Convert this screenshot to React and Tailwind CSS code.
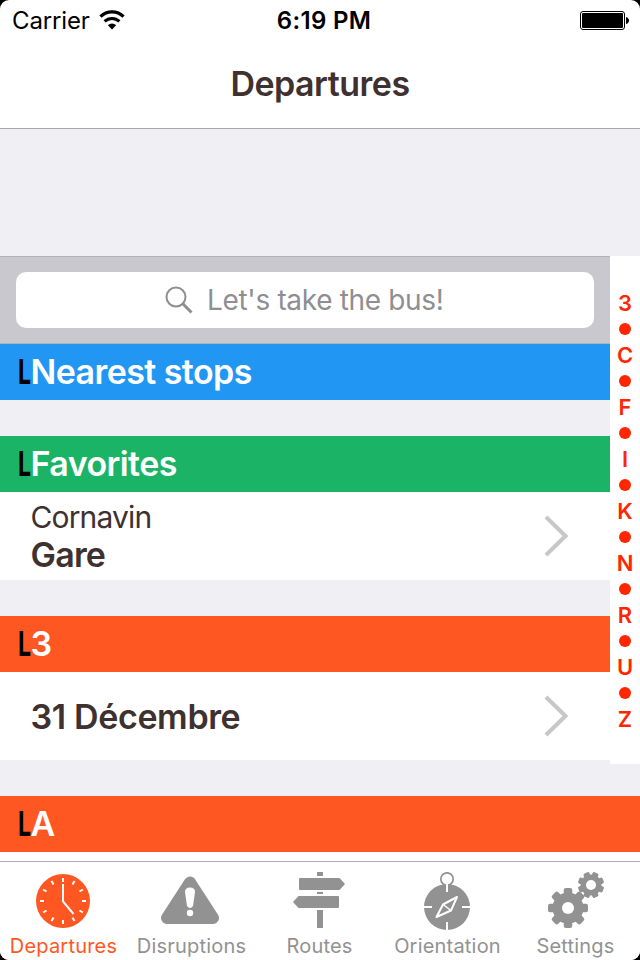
import React from "react";

function StatusBar() {
  return (
    <div className="flex h-10 items-center text-black">
      <div className="flex flex-1 items-center pl-3">
        <span className="pt-0.5 text-[24px] leading-10 tracking-[-0.15px]">Carrier</span>
        <svg className="ml-[9px]" width="26" height="20" viewBox="0 0 26 20" fill="none" stroke="#000">
          <path d="M1.500 6.700A16 16 0 0 1 24.500 6.700" strokeWidth="3.200" />
          <path d="M5.600 11.400A10.600 10.600 0 0 1 20.400 11.400" strokeWidth="3" />
          <path d="M8.800 15.200A6 6 0 0 1 17.200 15.200L13 19.500Z" fill="#000" stroke="none" />
        </svg>
      </div>
      <span className="pl-[7px] pt-0.5 text-[24px] font-semibold leading-10 tracking-[0.3px]">6:19 PM</span>
      <div className="flex flex-1 justify-end pr-[11px]">
        <svg width="49" height="19" viewBox="0 0 49 19">
          <rect x="0.5" y="0.5" width="44" height="18" rx="2.5" fill="none" stroke="#000" />
          <rect x="2" y="2" width="41" height="15" rx="1" />
          <path d="M46 6c4 1 4 6 0 7z" />
        </svg>
      </div>
    </div>
  );
}

function SectionHeader({ title, color }) {
  return (
    <div className={"flex h-14 shrink-0 pl-[17.500px] text-[34px] leading-[55px] " + color}>
      <div className="w-[13px] shrink-0">
        <span className="block w-5 origin-left scale-x-[0.68] font-bold leading-[56px] text-black">L</span>
      </div>
      <span className="whitespace-nowrap font-semibold tracking-[-0.58px] text-white">{title}</span>
    </div>
  );
}

function Row({ children }) {
  return (
    <div className="flex h-[88px] items-center justify-between bg-white pl-[30.500px] pr-10 text-[#3e3130]">
      <div>{children}</div>
      <svg width="26" height="42" viewBox="0 0 26 42" fill="none" stroke="#c7c7c7" strokeWidth="4">
        <path d="M2 2L21.500 21L2 40" />
      </svg>
    </div>
  );
}

const letters = ["3", "C", "F", "I", "K", "N", "R", "U", "Z"];

function IndexBar() {
  return (
    <div className="flex w-[30px] flex-col items-center bg-white pt-[34px] text-[22px] font-semibold leading-[26px] text-[#ff2600]">
      {letters.map((l, i) => (
        <React.Fragment key={l}>
          {i > 0 && (
            <div className="flex h-[26px] items-center">
              <div className="size-3 rounded-full bg-[#ff2600]" />
            </div>
          )}
          <div className="h-[26px]">{l}</div>
        </React.Fragment>
      ))}
    </div>
  );
}

function ClockIcon() {
  return (
    <svg className="mt-px" width="56" height="56" viewBox="0 0 56 56">
      <circle cx="28" cy="28" r="27" fill="#ff5722" />
      <g stroke="#fff" strokeWidth="2">
        {[0, 30, 60, 90, 120, 150, 180, 210, 240, 270, 300, 330].map((a) => (
          <path key={a} d="M28 5V9" transform={`rotate(${a} 28 28)`} />
        ))}
        <path d="M28 11V28.5L38.5 41" fill="none" />
      </g>
    </svg>
  );
}

function WarningIcon() {
  return (
    <svg className="mr-0.5" width="60" height="56" viewBox="0 0 60 56">
      <path d="M30 10.500L53 46H7Z" fill="#929292" stroke="#929292" strokeWidth="12" strokeLinejoin="round" />
      <path d="M25 20Q25 15.500 30 15.500T35 20L33 34Q30 38 27 34Z" fill="#fff" />
      <circle cx="30" cy="41" r="3.2" fill="#fff" />
    </svg>
  );
}

function RoutesIcon() {
  return (
    <svg width="54" height="56" viewBox="0 0 54 56" fill="#929292">
      <path d="M25 0h6v4h-6zM25 20h6v2h-6zM25 38h6v18h-6z" />
      <path d="M8 6h39.500l5.500 6l-5.500 6H8q-1 0-1-1V7q0-1 1-1zM46 24H6.500L1 30l5.500 6H46q1 0 1-1V25q0-1-1-1z" />
    </svg>
  );
}

function CompassIcon() {
  return (
    <svg width="48" height="58" viewBox="0 0 48 58">
      <circle cx="24" cy="35" r="23" fill="#929292" />
      <circle cx="24" cy="7" r="6.200" fill="#fff" stroke="#929292" strokeWidth="1.700" />
      <g stroke="#fff" strokeWidth="2" fill="none">
        <path d="M24 11V20M24 50V58M1 35H9M39 35H47M34 25L28 38.500L13.500 45L20 32.500Z" strokeLinejoin="round" />
        <path d="M20 32.500L28 38.500" strokeWidth="1.500" />
      </g>
    </svg>
  );
}

function Gear({ cx, cy, r, hole, tooth, body, spin = 0 }) {
  return (
    <g>
      <circle cx={cx} cy={cy} r={body} fill="#929292" />
      {[0, 45, 90, 135, 180, 225, 270, 315].map((a) => (
        <rect
          key={a}
          x={cx - tooth / 2}
          y={cy - r}
          width={tooth}
          height={r / 2}
          rx={tooth / 4}
          fill="#929292"
          transform={`rotate(${a + spin} ${cx} ${cy})`}
        />
      ))}
      <circle cx={cx} cy={cy} r={hole} fill="#fff" />
    </g>
  );
}

function SettingsIcon() {
  return (
    <svg width="58" height="58" viewBox="0 0 58 58">
      <Gear cx={21} cy={36} r={20} hole={6} tooth={8.5} body={15.5} />
      <Gear cx={44} cy={13} r={13.2} hole={5} tooth={6.2} body={10.5} spin={22.5} />
    </svg>
  );
}

function Tab({ icon, label, color = "text-[#929292]", nudge = "pr-0.5" }) {
  return (
    <div className={"flex w-32 flex-col items-center " + color}>
      <div className={"flex h-[62px] items-start " + nudge}>{icon}</div>
      <span className="pr-px text-[20px] leading-6 tracking-[0.2px]">{label}</span>
    </div>
  );
}

export default function App() {
  return (
    <div className="h-[960px] w-[640px] overflow-hidden bg-black font-['Inter','Liberation_Sans',sans-serif]">
      <div className="flex h-[960px] flex-col overflow-hidden rounded-[9px] bg-white">
        <StatusBar />
        <h1 className="h-[88px] text-center text-[34px] font-semibold leading-[88px] tracking-[-0.5px] text-[#3e3130]">
          Departures
        </h1>
        <main className="flex h-[733px] flex-col overflow-hidden border-t border-[#a7a7aa] bg-[#efeff4]">
          <div className="h-[127px] shrink-0" />
          <div className="flex h-[508px] shrink-0">
            <div className="w-[610px]">
              <div className="h-[88px] border-y border-y-[#b2b2b2] bg-[#c9c8ce] px-4 py-[15px]">
                <div className="flex h-14 w-[578px] items-center rounded-[10px] bg-white pl-[149px] text-[28px] text-[#8e8e93]">
                  <svg width="28" height="28" viewBox="0 0 28 28" fill="none" stroke="#8e8e93">
                    <circle cx="11" cy="11" r="9.500" strokeWidth="2" />
                    <path d="M17.800 17.800L26.500 26.500" strokeWidth="3" />
                  </svg>
                  <span className="ml-[14px] tracking-[-0.33px]">Let's take the bus!</span>
                </div>
              </div>
              <SectionHeader title="Nearest stops" color="bg-[#2196f3]" />
              <div className="h-9" />
              <SectionHeader title="Favorites" color="bg-[#1bb466]" />
              <Row>
                <div className="text-[30px] leading-[37px] tracking-[-0.85px]">Cornavin</div>
                <div className="text-[34px] font-semibold leading-[37px] tracking-[-0.8px]">Gare</div>
              </Row>
              <div className="h-9" />
              <SectionHeader title="3" color="bg-[#ff5722]" />
              <Row>
                <div className="text-[34px] font-semibold tracking-[-0.36px]">31 Décembre</div>
              </Row>
            </div>
            <IndexBar />
          </div>
          <div className="h-8 shrink-0" />
          <SectionHeader title="A" color="bg-[#ff5722]" />
          <div className="h-[9px] shrink-0 bg-white" />
        </main>
        <nav className="flex h-[99px] border-t border-[#acacac] bg-white pt-[10px]">
          <Tab label="Departures" color="text-[#ff5722]" icon={<ClockIcon />} />
          <Tab label="Disruptions" icon={<WarningIcon />} />
          <Tab label="Routes" icon={<RoutesIcon />} />
          <Tab label="Orientation" icon={<CompassIcon />} />
          <Tab label="Settings" icon={<SettingsIcon />} nudge="" />
        </nav>
      </div>
    </div>
  );
}
